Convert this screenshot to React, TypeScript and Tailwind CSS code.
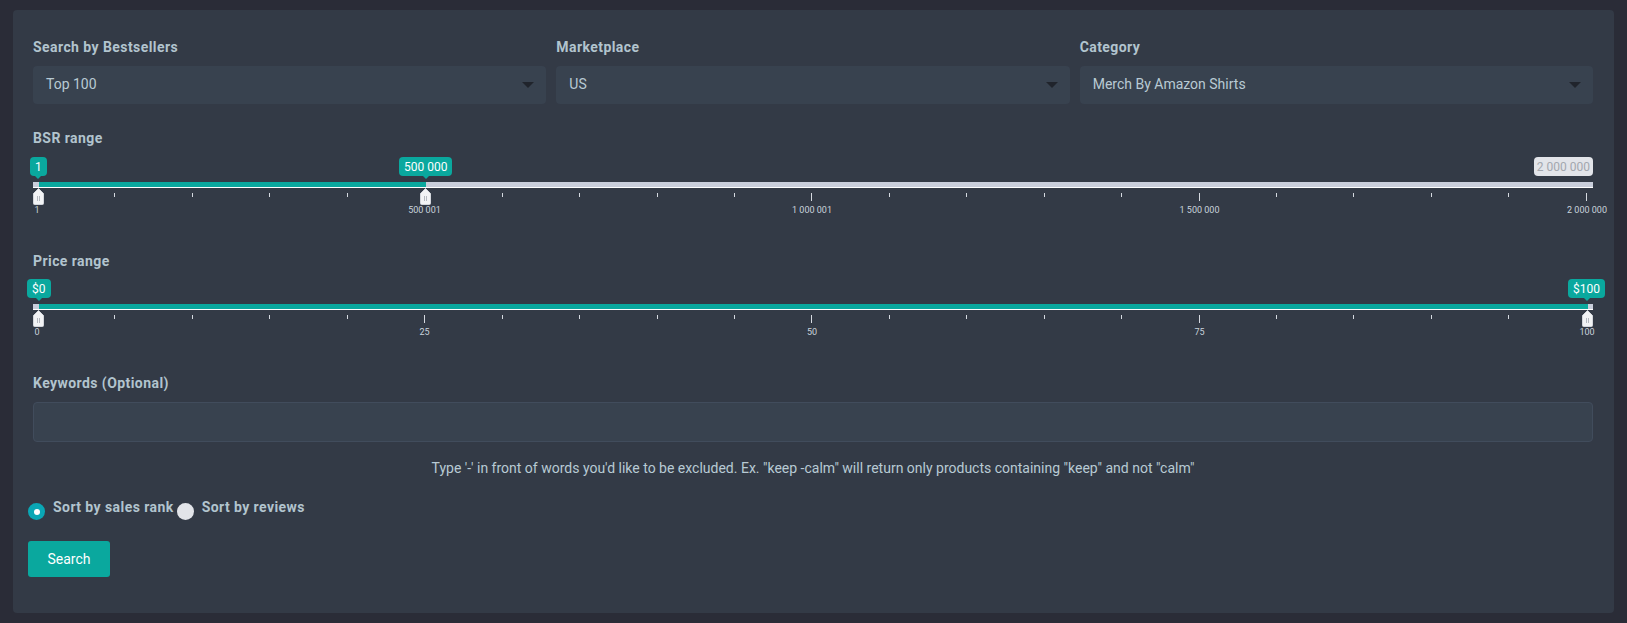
type Mark = { text: string; muted?: boolean };

const labelClass = "h-5 text-[14px] leading-5 font-bold tracking-[0.43px] text-[#b2c4ce]";

function Field({ label, value }: { label: string; value: string }) {
  return (
    <div>
      <div className={labelClass}>{label}</div>
      <div className="mt-[9px] flex h-[38px] items-center justify-between rounded bg-[#38424f] pr-3 pb-px pl-[13px] text-[14px] text-[#b8cad4]">
        <span>{value}</span>
        <span className="h-0 w-0 border-x-[6px] border-t-[6px] border-x-transparent border-t-[#20242c]" />
      </div>
    </div>
  );
}

function Handle({ left }: { left: string }) {
  return (
    <svg className={`absolute top-[31px] ${left} -ml-[5px]`} width="11" height="17" viewBox="0 0 11 17">
      <path d="M5.5.5 10.5 5.5v10a1 1 0 0 1-1 1h-8a1 1 0 0 1-1-1v-10z" fill="#f2f3f5" stroke="#d3d6dc" />
      <path d="M4.5 8v5M6.5 8v5" stroke="#b5b9c0" />
    </svg>
  );
}

function Tip({ mark, className }: { mark: Mark; className: string }) {
  return (
    <div
      className={`absolute top-0 flex h-[19px] items-center rounded-[4px] text-[12px] leading-none ${className} ${
        mark.muted ? "bg-[#e2e4e9] px-[3px] text-[#a3a7ae]" : "bg-[#0aa89e] px-[5px] text-white"
      }`}
    >
      {mark.text}
      {!mark.muted && (
        <span className="absolute top-full left-1/2 -ml-[3px] h-0 w-0 border-x-[3px] border-t-[3px] border-x-transparent border-t-[#0aa89e]" />
      )}
    </div>
  );
}

function Slider({
  from,
  to,
  fillWidth,
  labels,
  tips,
}: {
  from: string;
  to: string;
  fillWidth: string;
  labels: string[];
  tips: React.ReactNode;
}) {
  return (
    <div className="relative pt-[25px]">
      {tips}
      <div className="h-[6px] border-b border-white bg-[#c9cedb]">
        <div className={`ml-[6px] h-full bg-[#0aa89e] ${fillWidth}`} />
      </div>
      <Handle left={from} />
      <Handle left={to} />
      <div className="mt-[5px] mr-[6px] ml-[4px] flex h-2 items-start justify-between">
        {Array.from({ length: 21 }).map((_, i) => (
          <span key={i} className={`w-px bg-[#d5d9e0] ${i % 5 === 0 ? "h-2" : "h-1"}`} />
        ))}
      </div>
      <div className="mt-1 mr-[6px] ml-[4px] flex h-[11px] items-center justify-between text-[9px] leading-none text-[#c9d3dc]">
        {labels.map((l) => (
          <span key={l} className="flex w-0 justify-center whitespace-nowrap">
            {l}
          </span>
        ))}
      </div>
    </div>
  );
}

function Radio({ checked, label }: { checked?: boolean; label: string }) {
  return (
    <div className="flex items-start">
      <span
        className={`flex h-[17px] w-[17px] items-center justify-center rounded-full ${
          checked ? "bg-[#0aa7b5]" : "bg-[#e2e4e9]"
        }`}
      >
        {checked && <span className="h-[6px] w-[6px] rounded-full bg-white" />}
      </span>
      <span className={`ml-2 -mt-[6px] ${labelClass}`}>{label}</span>
    </div>
  );
}

export default function App() {
  return (
    <div className="h-[623px] overflow-hidden bg-[#2a2c37] px-[13px] pt-[10px] font-['Roboto',sans-serif]">
      <div className="h-[603px] rounded bg-[#333a46] pt-[27px] pr-[21px] pl-5">
        <div className="grid grid-cols-3 gap-[10px]">
          <Field label="Search by Bestsellers" value="Top 100" />
          <Field label="Marketplace" value="US" />
          <Field label="Category" value="Merch By Amazon Shirts" />
        </div>

        <div className={`mt-6 ${labelClass}`}>BSR range</div>
        <div className="mt-[9px]">
          <Slider
            from="left-[5px]"
            to="left-[392px]"
            fillWidth="w-[387px]"
            labels={["1", "500 001", "1 000 001", "1 500 000", "2 000 000"]}
            tips={
              <>
                <Tip mark={{ text: "1" }} className="left-[-3px]" />
                <Tip mark={{ text: "500 000" }} className="left-[366px]" />
                <Tip mark={{ text: "2 000 000", muted: true }} className="right-0" />
              </>
            }
          />
        </div>

        <div className={`mt-[35px] ${labelClass}`}>Price range</div>
        <div className="mt-2">
          <Slider
            from="left-[5px]"
            to="left-[1554px]"
            fillWidth="w-[1549px]"
            labels={["0", "25", "50", "75", "100"]}
            tips={
              <>
                <Tip mark={{ text: "$0" }} className="left-[-6px]" />
                <Tip mark={{ text: "$100" }} className="right-[-12px]" />
              </>
            }
          />
        </div>

        <div className={`mt-[35px] ${labelClass}`}>Keywords (Optional)</div>
        <input className="mt-[9px] block h-10 w-full rounded border border-[#414c5c] bg-[#38424f] outline-none" />
        <p className="mt-4 h-5 text-center text-[14px] leading-5 text-[#b8cad4]">
          Type '-' in front of words you'd like to be excluded. Ex. "keep -calm" will return only products containing
          "keep" and not "calm"
        </p>

        <div className="mt-[25px] -ml-[5px] flex gap-[3px]">
          <Radio checked label="Sort by sales rank" />
          <Radio label="Sort by reviews" />
        </div>
        <button className="mt-[21px] -ml-[5px] block h-9 w-[82px] rounded-[3px] bg-[#0aa89e] text-[14px] text-white">
          Search
        </button>
      </div>
    </div>
  );
}
